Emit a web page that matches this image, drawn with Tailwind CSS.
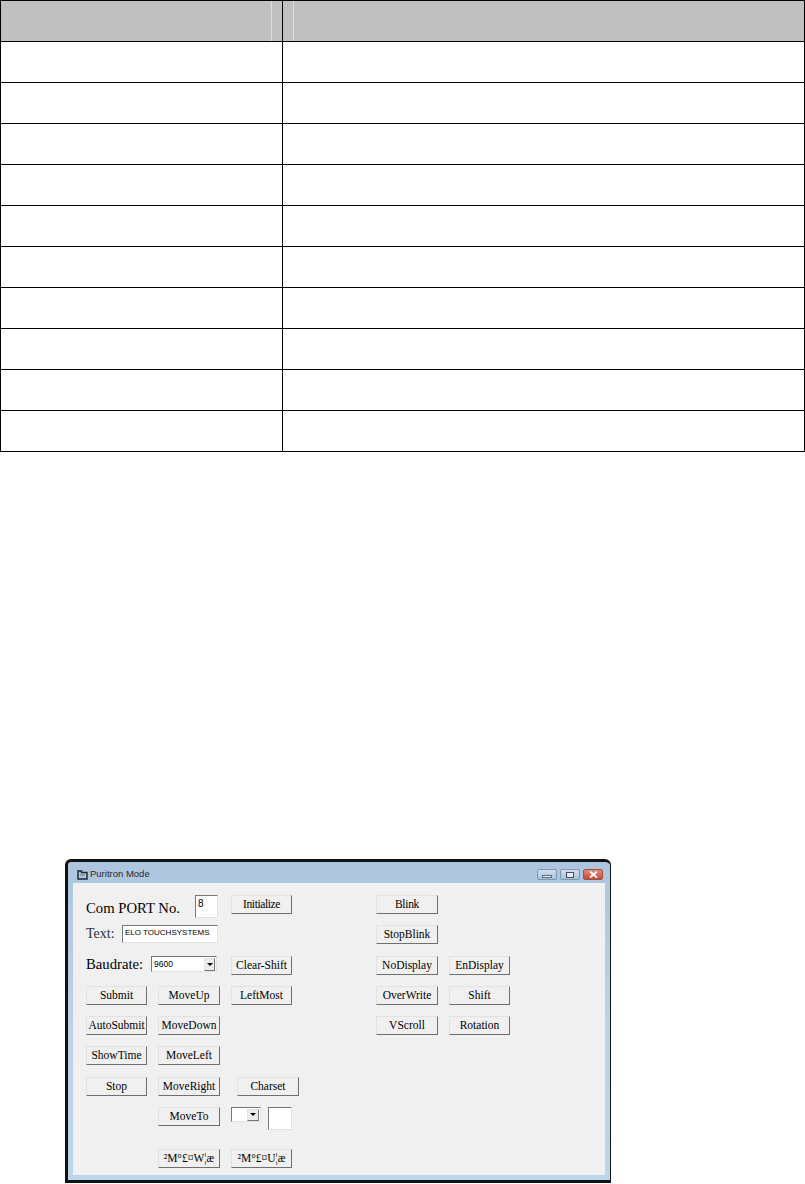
<!DOCTYPE html>
<html lang="en">

<head>
    <meta charset="UTF-8">
    <title>Puritron Mode</title>
    <script src="https://cdn.jsdelivr.net/npm/@tailwindcss/browser@4"></script>
</head>

<body class="bg-white font-['Liberation_Serif',serif] text-black overflow-hidden">
    <table class="w-[805px] table-fixed border-collapse">
        <thead>
            <tr class="h-[41px] bg-[#c0c0c0]">
                <th class="w-[282px] border border-black p-0">
                    <div class="h-[40px] w-[271px] border-r border-[#dedede]"></div>
                </th>
                <th class="border border-black p-0">
                    <div class="h-[40px] w-[11px] border-r border-[#dedede]"></div>
                </th>
            </tr>
        </thead>
        <tbody>
            <tr class="h-[41px]"><td class="border border-black"></td><td class="border border-black"></td></tr>
            <tr class="h-[41px]"><td class="border border-black"></td><td class="border border-black"></td></tr>
            <tr class="h-[41px]"><td class="border border-black"></td><td class="border border-black"></td></tr>
            <tr class="h-[41px]"><td class="border border-black"></td><td class="border border-black"></td></tr>
            <tr class="h-[41px]"><td class="border border-black"></td><td class="border border-black"></td></tr>
            <tr class="h-[41px]"><td class="border border-black"></td><td class="border border-black"></td></tr>
            <tr class="h-[41px]"><td class="border border-black"></td><td class="border border-black"></td></tr>
            <tr class="h-[41px]"><td class="border border-black"></td><td class="border border-black"></td></tr>
            <tr class="h-[41px]"><td class="border border-black"></td><td class="border border-black"></td></tr>
            <tr class="h-[41px]"><td class="border border-black"></td><td class="border border-black"></td></tr>
        </tbody>
    </table>

    <!-- window screenshot -->
    <div class="mt-[407px] ml-[65px] w-[546px] h-[324px] border-[#111] border-t-[3px] border-l-[3px] border-b-[3px] border-r rounded-t-md bg-gradient-to-b from-[#aec5df] via-[#bdd2e8] to-[#bcd5ea] flex flex-col">
        <div class="h-[21px] flex items-center justify-between pt-[4px] pl-[9px] pr-[7px] shrink-0">
            <div class="flex items-center gap-[2px]">
                <svg width="11" height="10" viewBox="0 0 11 10" fill="none" stroke="#1c2430" stroke-width="1.4">
                    <path d="M1 1h3.500v1.500H10v6.500H1z" />
                    <path d="M3 5h5" stroke="#6d7785" stroke-width="1" />
                </svg>
                <span class="font-['Liberation_Sans',sans-serif] text-[9.5px] text-[#26292e]">Puritron Mode</span>
            </div>
            <div class="flex gap-[3px]">
                <div class="w-[20px] h-[11px] rounded-[2px] border border-[#7f96ad] bg-gradient-to-b from-[#cfdeee] to-[#a8c2dd] flex items-end justify-center pb-[1px]">
                    <div class="w-[10px] h-[3px] bg-[#eef2f6] border border-[#5b6b7d]"></div>
                </div>
                <div class="w-[20px] h-[11px] rounded-[2px] border border-[#7f96ad] bg-gradient-to-b from-[#cfdeee] to-[#a8c2dd] flex items-center justify-center">
                    <div class="w-[8px] h-[6px] border-[1.5px] border-[#3f4d5e] bg-[#e8eef5]"></div>
                </div>
                <div class="w-[20px] h-[11px] rounded-[2px] border border-[#a4503c] bg-gradient-to-b from-[#e08a75] to-[#c8493a] flex items-center justify-center">
                    <svg width="9" height="7" viewBox="0 0 9 7" stroke="#fff" stroke-width="2"><path d="M1 0.500l7 6M8 0.500l-7 6" /></svg>
                </div>
            </div>
        </div>
        <div class="ml-[5px] mr-[5px] mb-[5px] flex-1 bg-[#f0f0f0] pt-[12px] pl-[13px] text-[11.5px] leading-none">
            <div class="grid grid-cols-[61px_62px_61px_62px_62px_61px] grid-rows-[30px_31px_30px_30px_30px_31px_30px_42px_19px] gap-x-[11px]">
                <!-- row 1 -->
                <div class="col-start-1 col-span-2 row-start-1 flex justify-between pr-[2px] h-[23px]">
                    <span class="text-[14.7px] leading-[19px] pt-[4px]">Com PORT No.</span>
                    <div class="w-[23px] h-[23px] bg-white border border-t-[#777] border-l-[#777] border-r-[#e2e2e2] border-b-[#e2e2e2] pl-[2px] pt-[3px] text-[10px] font-['Liberation_Sans',sans-serif]">8</div>
                </div>
                <button class="col-start-3 row-start-1 h-[19px] tracking-[-0.4px] bg-[#f0f0f0] border border-[#e2e2e2] border-r-[#6f6f6f] border-b-[#6f6f6f]">Initialize</button>
                <button class="col-start-5 row-start-1 h-[19px] tracking-[-0.3px] bg-[#f0f0f0] border border-[#e2e2e2] border-r-[#6f6f6f] border-b-[#6f6f6f]">Blink</button>

                <!-- row 2 -->
                <div class="col-start-1 col-span-2 row-start-2 flex justify-between items-start pr-[2px]">
                    <span class="text-[14px] leading-[18px] text-[#333]">Text:</span>
                    <div class="w-[96px] h-[18px] bg-white border border-t-[#777] border-l-[#777] border-r-[#e2e2e2] border-b-[#e2e2e2] pl-[2px] pt-[3px] text-[8px] whitespace-nowrap font-['Liberation_Sans',sans-serif]">ELO TOUCHSYSTEMS</div>
                </div>
                <button class="col-start-5 row-start-2 h-[19px] bg-[#f0f0f0] border border-[#e2e2e2] border-r-[#6f6f6f] border-b-[#6f6f6f]">StopBlink</button>

                <!-- row 3 -->
                <div class="col-start-1 col-span-2 row-start-3 flex justify-between items-start pr-[3px]">
                    <span class="text-[14.7px] leading-[16px]">Baudrate:</span>
                    <div class="w-[66px] h-[16px] bg-white border border-t-[#777] border-l-[#777] border-r-[#e2e2e2] border-b-[#e2e2e2] flex justify-between items-center pl-[2px] pr-px text-[8.5px] font-['Liberation_Sans',sans-serif]">
                        <span>9600</span>
                        <div class="w-[11px] h-[13px] bg-[#ececec] border border-[#e2e2e2] border-r-[#777] border-b-[#777] flex items-center justify-center">
                            <div class="border-x-[3px] border-t-[3px] border-x-transparent border-t-black"></div>
                        </div>
                    </div>
                </div>
                <button class="col-start-3 row-start-3 h-[19px] bg-[#f0f0f0] border border-[#e2e2e2] border-r-[#6f6f6f] border-b-[#6f6f6f]">Clear-Shift</button>
                <button class="col-start-5 row-start-3 h-[19px] bg-[#f0f0f0] border border-[#e2e2e2] border-r-[#6f6f6f] border-b-[#6f6f6f]">NoDisplay</button>
                <button class="col-start-6 row-start-3 h-[19px] bg-[#f0f0f0] border border-[#e2e2e2] border-r-[#6f6f6f] border-b-[#6f6f6f]">EnDisplay</button>

                <!-- row 4 -->
                <button class="col-start-1 row-start-4 h-[19px] bg-[#f0f0f0] border border-[#e2e2e2] border-r-[#6f6f6f] border-b-[#6f6f6f]">Submit</button>
                <button class="col-start-2 row-start-4 h-[19px] bg-[#f0f0f0] border border-[#e2e2e2] border-r-[#6f6f6f] border-b-[#6f6f6f]">MoveUp</button>
                <button class="col-start-3 row-start-4 h-[19px] bg-[#f0f0f0] border border-[#e2e2e2] border-r-[#6f6f6f] border-b-[#6f6f6f]">LeftMost</button>
                <button class="col-start-5 row-start-4 h-[19px] bg-[#f0f0f0] border border-[#e2e2e2] border-r-[#6f6f6f] border-b-[#6f6f6f]">OverWrite</button>
                <button class="col-start-6 row-start-4 h-[19px] bg-[#f0f0f0] border border-[#e2e2e2] border-r-[#6f6f6f] border-b-[#6f6f6f]">Shift</button>

                <!-- row 5 -->
                <button class="col-start-1 row-start-5 h-[19px] bg-[#f0f0f0] border border-[#e2e2e2] border-r-[#6f6f6f] border-b-[#6f6f6f] whitespace-nowrap">AutoSubmit</button>
                <button class="col-start-2 row-start-5 h-[19px] bg-[#f0f0f0] border border-[#e2e2e2] border-r-[#6f6f6f] border-b-[#6f6f6f] whitespace-nowrap">MoveDown</button>
                <button class="col-start-5 row-start-5 h-[19px] bg-[#f0f0f0] border border-[#e2e2e2] border-r-[#6f6f6f] border-b-[#6f6f6f]">VScroll</button>
                <button class="col-start-6 row-start-5 h-[19px] bg-[#f0f0f0] border border-[#e2e2e2] border-r-[#6f6f6f] border-b-[#6f6f6f]">Rotation</button>

                <!-- row 6 -->
                <button class="col-start-1 row-start-6 h-[19px] bg-[#f0f0f0] border border-[#e2e2e2] border-r-[#6f6f6f] border-b-[#6f6f6f]">ShowTime</button>
                <button class="col-start-2 row-start-6 h-[19px] bg-[#f0f0f0] border border-[#e2e2e2] border-r-[#6f6f6f] border-b-[#6f6f6f]">MoveLeft</button>

                <!-- row 7 -->
                <button class="col-start-1 row-start-7 h-[19px] bg-[#f0f0f0] border border-[#e2e2e2] border-r-[#6f6f6f] border-b-[#6f6f6f]">Stop</button>
                <button class="col-start-2 row-start-7 h-[19px] bg-[#f0f0f0] border border-[#e2e2e2] border-r-[#6f6f6f] border-b-[#6f6f6f] whitespace-nowrap">MoveRight</button>
                <button class="col-start-3 row-start-7 ml-[6px] w-[62px] h-[19px] bg-[#f0f0f0] border border-[#e2e2e2] border-r-[#6f6f6f] border-b-[#6f6f6f]">Charset</button>

                <!-- row 8 -->
                <button class="col-start-2 row-start-8 h-[19px] bg-[#f0f0f0] border border-[#e2e2e2] border-r-[#6f6f6f] border-b-[#6f6f6f]">MoveTo</button>
                <div class="col-start-3 row-start-8 flex justify-between items-start">
                    <div class="w-[30px] h-[15px] bg-white border border-t-[#777] border-l-[#777] border-r-[#e2e2e2] border-b-[#e2e2e2] flex justify-end items-center pr-px">
                        <div class="w-[12px] h-[12px] bg-[#ececec] border border-[#e2e2e2] border-r-[#777] border-b-[#777] flex items-center justify-center">
                            <div class="border-x-[3px] border-t-[3px] border-x-transparent border-t-black"></div>
                        </div>
                    </div>
                    <div class="w-[24px] h-[23px] bg-white border border-t-[#777] border-l-[#777] border-r-[#e2e2e2] border-b-[#e2e2e2]"></div>
                </div>

                <!-- row 9 -->
                <button class="col-start-2 row-start-9 h-[19px] bg-[#f0f0f0] border border-[#e2e2e2] border-r-[#6f6f6f] border-b-[#6f6f6f] whitespace-nowrap">²M°£¤W¦æ</button>
                <button class="col-start-3 row-start-9 h-[19px] bg-[#f0f0f0] border border-[#e2e2e2] border-r-[#6f6f6f] border-b-[#6f6f6f] whitespace-nowrap">²M°£¤U¦æ</button>
            </div>
        </div>
    </div>
</body>

</html>
